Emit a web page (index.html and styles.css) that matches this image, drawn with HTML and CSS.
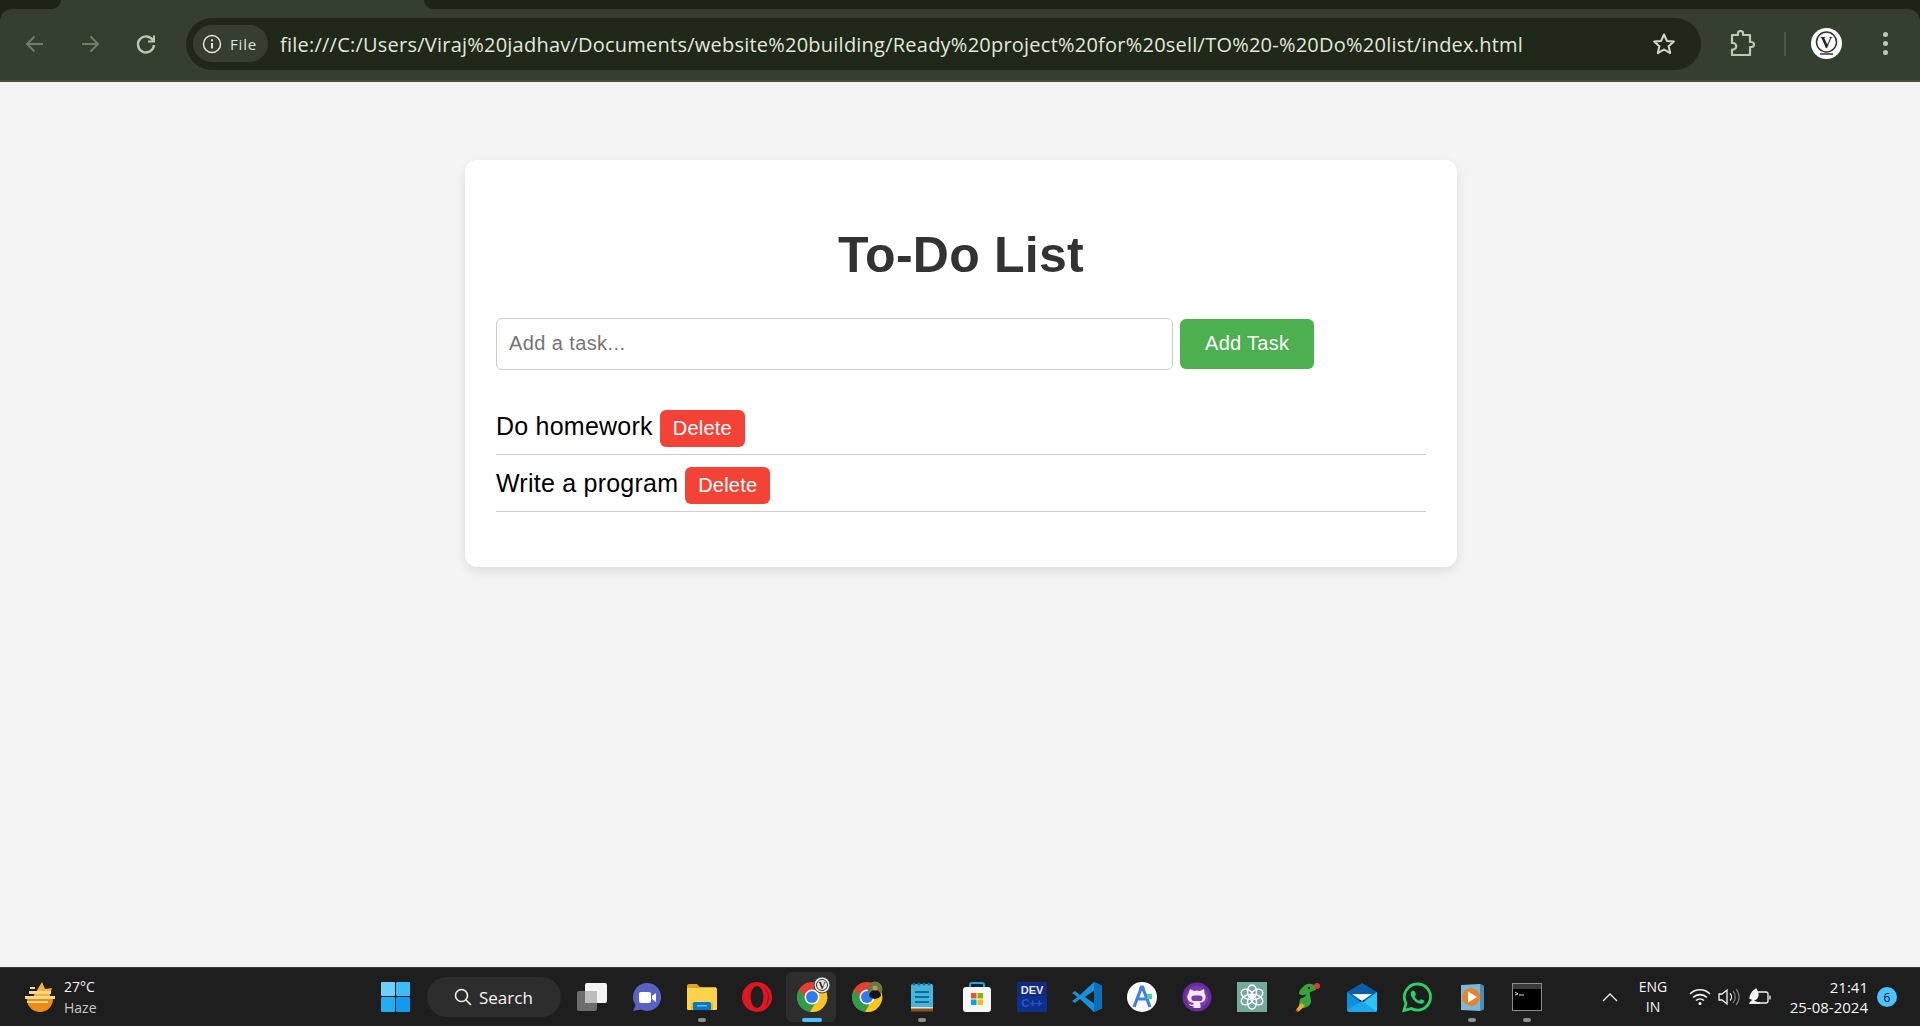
FILE: index.html
```html
<!DOCTYPE html>
<html lang="en">
  <head>
    <meta charset="UTF-8" />
    <meta name="viewport" content="width=device-width, initial-scale=1.0" />
    <title>To-Do List</title>
    <link rel="stylesheet" href="styles.css">
  </head>
  <body>
    <!-- Browser frame -->
    <header class="browser">
      <div class="tab-strip">
        <div class="strip-left"></div>
        <div class="active-tab"></div>
        <div class="strip-right"></div>
      </div>
      <div class="toolbar">
        <span class="nav-btn">
          <svg width="22" height="22" viewBox="0 0 22 22" fill="none" stroke="#6f7f68" stroke-width="2"><path d="M19 11H3M10.500 3.500 3 11l7.500 7.500"/></svg>
        </span>
        <span class="nav-btn">
          <svg width="22" height="22" viewBox="0 0 22 22" fill="none" stroke="#6f7f68" stroke-width="2"><path d="M3 11h16M11.500 3.500 19 11l-7.500 7.500"/></svg>
        </span>
        <span class="nav-btn reload-btn">
          <svg width="22" height="22" viewBox="0 0 22 22" fill="none" stroke="#b9c9b1" stroke-width="2.400"><path d="M18 7.500A8 8 0 1 0 19 12"/><path d="M19 2.500v6h-6" stroke-width="2"/></svg>
        </span>
        <div class="omnibox">
          <span class="site-chip">
            <svg width="20" height="20" viewBox="0 0 20 20" fill="none" stroke="#dfe6d8" stroke-width="1.500"><circle cx="10" cy="10" r="8.500"/><path d="M10 9v5.500" stroke-width="2"/><path d="M10 5.300v2" stroke-width="2"/></svg>
            <span class="chip-label">File</span>
          </span>
          <span class="url">file:///C:/Users/Viraj%20jadhav/Documents/website%20building/Ready%20project%20for%20sell/TO%20-%20Do%20list/index.html</span>
          <svg class="star" width="24" height="24" viewBox="0 0 24 24" fill="none" stroke="#d3dccb" stroke-width="2" stroke-linejoin="round"><path d="M12 2.500l2.900 6.400 7 .7-5.300 4.600 1.600 6.900-6.200-3.600-6.200 3.600 1.600-6.900-5.300-4.600 7-.7z"/></svg>
        </div>
        <svg class="puzzle" width="26" height="28" viewBox="0 0 26 28" fill="none" stroke="#bccab3" stroke-width="2.200" stroke-linejoin="round"><path d="M3 5h6V3.500a2.500 2.500 0 0 1 5 0V5h7v7h1.500a2.500 2.500 0 0 1 0 5H21v8H3v-5.500h1a3 3 0 0 0 0-6.500H3z"/></svg>
        <span class="tool-divider"></span>
        <span class="avatar">
          <svg width="31" height="31" viewBox="0 0 31 31"><circle cx="15.500" cy="15.500" r="15.500" fill="#fff"/><circle cx="15.500" cy="14" r="10" fill="none" stroke="#333" stroke-width="1.500"/><text x="15.500" y="20" text-anchor="middle" class="avatar-v">V</text><path d="M9 26h13" stroke="#333" stroke-width="1.500"/></svg>
        </span>
        <span class="menu-dots"><i></i><i></i><i></i></span>
      </div>
    </header>

    <!-- Page -->
    <main class="page">
      <div class="container">
        <h1>To-Do List</h1>
        <div class="task-form">
          <input class="task-input" type="text" placeholder="Add a task..." />
          <button class="add-btn">Add Task</button>
        </div>
        <ul class="task-list">
          <li class="task-item"><span>Do homework</span><button class="delete-btn">Delete</button></li>
          <li class="task-item"><span>Write a program</span><button class="delete-btn">Delete</button></li>
        </ul>
      </div>
    </main>

    <!-- Windows taskbar -->
    <footer class="taskbar">
      <div class="weather">
        <svg width="30" height="30" viewBox="0 0 30 30"><path d="M17 0l3 7 7-1-2 6a13 13 0 0 1-22 11z" fill="#f6b23c"/><path d="M2 17a13 13 0 0 0 26 0z" fill="#ee8a17"/><g fill="#f8d98a"><rect x="0" y="14" width="30" height="3"/><rect x="4" y="9" width="22" height="3"/><rect x="2" y="19" width="21" height="2"/><rect x="5" y="5" width="5" height="2"/></g></svg>
        <div class="weather-text">
          <span class="temp">27°C</span>
          <span class="sky">Haze</span>
        </div>
      </div>

      <span class="tile">
        <svg width="30" height="30" viewBox="0 0 30 30"><rect x="0" y="0" width="14" height="14" rx="1" fill="#6fd0fb"/><rect x="15" y="0" width="14" height="14" rx="1" fill="#3cbcf8"/><rect x="0" y="15" width="14" height="15" rx="1" fill="#22aef5"/><rect x="15" y="15" width="14" height="15" rx="1" fill="#109bf0"/></svg>
      </span>
      <div class="search-pill">
        <svg width="18" height="18" viewBox="0 0 18 18" fill="none" stroke="#f2f2f2" stroke-width="1.600"><circle cx="7.500" cy="7.500" r="6"/><path d="M12 12l5 5"/></svg>
        <span>Search</span>
      </div>

      <div class="apps">
        <!-- Task view -->
        <span class="tile">
          <svg width="30" height="30" viewBox="0 0 30 30"><rect x="0" y="9" width="20" height="20" rx="2" fill="#6d6d6d"/><rect x="8" y="1" width="22" height="20" rx="2" fill="#f4f4f4"/><rect x="8" y="9" width="12" height="12" fill="#bdbdbd"/></svg>
        </span>
        <!-- Meet -->
        <span class="tile">
          <svg width="30" height="30" viewBox="0 0 30 30"><path d="M15 1a14 14 0 1 1-6 26.600L1 29l2.500-6A14 14 0 0 1 15 1z" fill="#5b62c6"/><rect x="7" y="10" width="12" height="11" rx="2" fill="#fff"/><path d="M20 14l4-3v9l-4-3z" fill="#fff"/></svg>
        </span>
        <!-- File explorer -->
        <span class="tile running">
          <svg width="32" height="30" viewBox="0 0 32 30"><path d="M1 4a2 2 0 0 1 2-2h8l3 3h16v6H1z" fill="#e0a31a"/><rect x="1" y="6" width="30" height="22" rx="1" fill="#fcd24f"/><rect x="5" y="21" width="22" height="7" fill="#f2b90f"/><rect x="7" y="20" width="18" height="8" rx="1.500" fill="#0a78c8"/><rect x="11" y="23" width="10" height="1.500" fill="#5cc0f0"/></svg>
        </span>
        <!-- Opera -->
        <span class="tile">
          <svg width="30" height="30" viewBox="0 0 30 30"><circle cx="15" cy="15" r="15" fill="#e01722"/><ellipse cx="15" cy="15" rx="6.500" ry="11" fill="#1f1f1f"/><path d="M22 5a15 15 0 0 1 0 20 12 12 0 0 0 0-20z" fill="#a70d18"/></svg>
        </span>
        <!-- Chrome with profile badge -->
        <span class="tile active">
          <svg width="30" height="30" viewBox="0 0 30 30"><circle cx="15" cy="15" r="15" fill="#e3402f"/><path d="M2 7.500A15 15 0 0 0 13 29.900L19 19H11z" fill="#2f9e48"/><path d="M13 29.900A15 15 0 0 0 28.500 8H15l6 8z" fill="#f7c51c"/><circle cx="15" cy="15" r="7.500" fill="#fff"/><circle cx="15" cy="15" r="6" fill="#2e7cf0"/><circle cx="25" cy="3" r="8" fill="#e8e8e8" stroke="#444" stroke-width="1"/><circle cx="25" cy="3" r="5.500" fill="none" stroke="#333"/><text x="25" y="6.500" text-anchor="middle" class="badge-v">V</text></svg>
        </span>
        <!-- Chrome, second profile -->
        <span class="tile">
          <svg width="30" height="30" viewBox="0 0 30 30"><circle cx="15" cy="15" r="15" fill="#e3402f"/><path d="M2 7.500A15 15 0 0 0 13 29.900L19 19H11z" fill="#2f9e48"/><path d="M13 29.900A15 15 0 0 0 28.500 8H15l6 8z" fill="#f7c51c"/><circle cx="15" cy="15" r="7.500" fill="#fff"/><circle cx="15" cy="15" r="6" fill="#2e7cf0"/><circle cx="23" cy="7" r="7.500" fill="#6b7a3c"/><path d="M17 14a6 6 0 0 1 12 0 7.500 7.500 0 0 1-12 0z" fill="#10151c"/><circle cx="23" cy="6" r="2.500" fill="#c79468"/></svg>
        </span>
        <!-- Notepad -->
        <span class="tile running">
          <svg width="24" height="30" viewBox="0 0 24 30"><rect x="1" y="2" width="22" height="27" rx="1.500" fill="#45b5dc"/><rect x="1" y="26" width="22" height="3.500" fill="#8b4f1c"/><rect x="1" y="25" width="22" height="1.500" fill="#e6e0d0"/><g fill="#0d6d97"><rect x="5" y="9" width="14" height="2"/><rect x="5" y="14" width="14" height="2"/><rect x="5" y="19" width="14" height="2"/><circle cx="4" cy="2" r="1.500"/><circle cx="9" cy="2" r="1.500"/><circle cx="14" cy="2" r="1.500"/><circle cx="19" cy="2" r="1.500"/></g></svg>
        </span>
        <!-- Store -->
        <span class="tile">
          <svg width="30" height="30" viewBox="0 0 30 30"><path d="M8 7V3a2 2 0 0 1 2-2h10a2 2 0 0 1 2 2v4" fill="none" stroke="#1aa6e8" stroke-width="2"/><rect x="1" y="5" width="28" height="25" rx="3" fill="#f7f7f7"/><rect x="9" y="11" width="5.500" height="5.500" fill="#f25022"/><rect x="15.500" y="11" width="5.500" height="5.500" fill="#7fba00"/><rect x="9" y="17.500" width="5.500" height="5.500" fill="#00a4ef"/><rect x="15.500" y="17.500" width="5.500" height="5.500" fill="#ffb900"/></svg>
        </span>
        <!-- Dev C++ -->
        <span class="tile">
          <svg width="30" height="30" viewBox="0 0 30 30"><rect x="0" y="0" width="30" height="30" fill="#142a80"/><rect x="0" y="14" width="30" height="16" fill="#0f2f8c"/><text x="15" y="12" text-anchor="middle" class="dev-top">DEV</text><text x="15" y="25" text-anchor="middle" class="dev-bottom">C++</text></svg>
        </span>
        <!-- VS Code -->
        <span class="tile">
          <svg width="30" height="30" viewBox="0 0 30 30"><path d="M22 0l8 3.500v23L22 30 8 17l-5 4-3-2 5.500-4L0 11l3-2 5 4z" fill="#1b8fdc"/><path d="M22 0l8 3.500v23L22 30z" fill="#0a6fb8"/><path d="M22 8.500L13 15l9 6.500z" fill="#1f1f1f"/></svg>
        </span>
        <!-- Android Studio -->
        <span class="tile">
          <svg width="30" height="30" viewBox="0 0 30 30"><circle cx="15" cy="15" r="15" fill="#fff"/><path d="M15 4L7 25M15 4l8 21M9.500 17h11" fill="none" stroke="#3f7ff0" stroke-width="3.200"/><circle cx="15" cy="6" r="2.500" fill="#3f7ff0"/><rect x="20" y="12" width="5" height="5" fill="#3ddc84"/></svg>
        </span>
        <!-- GitHub -->
        <span class="tile">
          <svg width="30" height="30" viewBox="0 0 30 30"><circle cx="15" cy="15" r="14.500" fill="#6b2d9e"/><circle cx="15" cy="15" r="11" fill="#7b3db0"/><path d="M8 7l4 2a10 10 0 0 1 6 0l4-2 .5 4.500c1 1.500 1.500 3 1 5-.8 3-3.500 4-6 4.300.8.700 1 1.700 1 2.700v2.500h-7v-2c-2.500.5-4-.5-5-2.500 1.500.5 2.500 2 5 1v-1.700c-2.500-.300-5.200-1.300-6-4.300-.5-2 0-3.500 1-5z" fill="#f3e9f9"/><path d="M11 19c-1-.5-2-2-1.500-4 .5-1.500 2-1.500 5.500-1.500s5 0 5.500 1.500c.5 2-.5 3.500-1.500 4z" fill="#7b3db0"/></svg>
        </span>
        <!-- ChatGPT -->
        <span class="tile">
          <svg width="30" height="30" viewBox="0 0 30 30"><rect width="30" height="30" fill="#74aa9c"/><g fill="none" stroke="#fff" stroke-width="1.400"><ellipse cx="15" cy="9.500" rx="4.500" ry="6.500"/><ellipse cx="15" cy="9.500" rx="4.500" ry="6.500" transform="rotate(60 15 15)"/><ellipse cx="15" cy="9.500" rx="4.500" ry="6.500" transform="rotate(120 15 15)"/><ellipse cx="15" cy="9.500" rx="4.500" ry="6.500" transform="rotate(180 15 15)"/><ellipse cx="15" cy="9.500" rx="4.500" ry="6.500" transform="rotate(240 15 15)"/><ellipse cx="15" cy="9.500" rx="4.500" ry="6.500" transform="rotate(300 15 15)"/></g></svg>
        </span>
        <!-- Parrot -->
        <span class="tile">
          <svg width="30" height="30" viewBox="0 0 30 30"><path d="M11 5c3-4 9-4 12-1l1 4-6 2c-1 3 1 5 1 9 0 4-3 6-7 7l-5 .500c0-3 0-6 1-9 1-2 6-2 6-5-2 1-6 1-7-1 0-3 2-5 4-6.500z" fill="#37a53a"/><path d="M9 21l4 3-7 6-2-2z" fill="#f2a62c"/><path d="M3.500 30l1-3 2 1.500z" fill="#c6472a"/><circle cx="25" cy="4" r="3" fill="#d93a3a"/><circle cx="17" cy="6" r="1.200" fill="#123"/></svg>
        </span>
        <!-- Mail -->
        <span class="tile">
          <svg width="30" height="30" viewBox="0 0 30 30"><path d="M0 10L15 1l15 9v8H0z" fill="#0b5ea8"/><path d="M5 12h20l-10 7z" fill="#f2f6fa"/><path d="M0 10l15 11v9H2a2 2 0 0 1-2-2z" fill="#0c8fe0"/><path d="M30 10L15 21v9h13a2 2 0 0 0 2-2z" fill="#2fc2f8"/><path d="M0 28l15-9 15 11H2z" fill="#1ba6ee"/></svg>
        </span>
        <!-- WhatsApp -->
        <span class="tile">
          <svg width="30" height="30" viewBox="0 0 30 30"><path d="M15.500 2a13 13 0 1 1-6.200 24.400L2 28.500l2-7.200A13 13 0 0 1 15.500 2z" fill="none" stroke="#25d366" stroke-width="2.800"/><path d="M11 8.500c-1 0-2.300 1.300-2.300 3.200 0 4.200 5.500 10 10.300 10 2 0 3.300-1.400 3.300-2.500 0-.8-2.500-2-3.300-2-.7 0-1 1.400-1.800 1.400-1.500 0-4.500-3-4.500-4.200 0-.8 1.200-1.200 1.200-2 0-.8-1.200-3.900-2.900-3.900z" fill="#25d366"/></svg>
        </span>
        <!-- Media player -->
        <span class="tile running">
          <svg width="26" height="30" viewBox="0 0 26 30"><path d="M2 3l19-1 4 2v23l-4 2-19-1z" fill="#7fb7d8"/><path d="M21 2l4 2v23l-4 2z" fill="#4b8db5"/><circle cx="12" cy="15" r="9" fill="#e9832a"/><path d="M9 9.500l9 5.500-9 5.500z" fill="#fff"/></svg>
        </span>
        <!-- Terminal -->
        <span class="tile running">
          <svg width="30" height="28" viewBox="0 0 30 28"><rect x="0.500" y="0.500" width="29" height="27" fill="#000" stroke="#8c8c8c"/><rect x="1" y="1" width="28" height="5" fill="#3a3a3a"/><path d="M3 9l3 2-3 1M7 12h5" fill="none" stroke="#d8d8d8"/></svg>
        </span>
      </div>

      <div class="tray">
        <svg class="chevron" width="16" height="10" viewBox="0 0 16 10" fill="none" stroke="#f0f0f0" stroke-width="1.300"><path d="M1 9l7-7 7 7"/></svg>
        <div class="lang"><span>ENG</span><span>IN</span></div>
        <svg class="wifi" width="22" height="18" viewBox="0 0 22 18" fill="none" stroke="#f5f5f5" stroke-width="1.600"><path d="M1 6a14 14 0 0 1 20 0M4 9.500a10 10 0 0 1 14 0M7 12.500a6 6 0 0 1 8 0"/><circle cx="11" cy="15.500" r="1.500" fill="#f5f5f5" stroke="none"/></svg>
        <svg class="speaker" width="22" height="20" viewBox="0 0 22 20" fill="none" stroke="#f5f5f5" stroke-width="1.300"><path d="M1 7v6h3l5 4V3L4 7z"/><path d="M12 6.500a5 5 0 0 1 0 7"/><path d="M15 4a9 9 0 0 1 0 12M18 2a12 12 0 0 1 0 16" stroke="#777"/></svg>
        <svg class="battery" width="24" height="20" viewBox="0 0 24 20" fill="none" stroke="#f5f5f5" stroke-width="1.300"><path d="M5 5h13a2 2 0 0 1 2 2v7a2 2 0 0 1-2 2H2"/><path d="M22 8.500v4"/><path d="M2 12c0-5 3-8 6-10 2 3 3 6 1 9-2 2-5 2-7 5h10" fill="#f5f5f5"/></svg>
        <div class="clock"><span>21:41</span><span>25-08-2024</span></div>
        <span class="notify">6</span>
      </div>
    </footer>
  </body>
</html>
```

FILE: styles.css
```css
/* General styles */
* {
  box-sizing: border-box;
}

body {
  font-family: "Liberation Sans", Arial, sans-serif;
  background-color: #f4f4f4;
  margin: 0;
  height: 1026px;
  display: flex;
  flex-direction: column;
  overflow: hidden;
}

/* Browser frame */
.browser {
  background-color: #1b2416;
  flex: none;
}

.tab-strip {
  display: flex;
  height: 9px;
  background-color: #353f2f;
}

.strip-left {
  width: 61px;
  background-color: #1b2416;
  border-bottom-right-radius: 12px;
}

.active-tab {
  width: 363px;
}

.strip-right {
  flex: 1;
  background-color: #1b2416;
  border-bottom-left-radius: 12px;
}

.toolbar {
  display: flex;
  align-items: center;
  height: 73px;
  padding: 0 0 2px 7px;
  background-color: #353f2f;
  border-radius: 12px 12px 0 0;
  border-bottom: 2px solid #474f42;
}

.nav-btn {
  display: flex;
  justify-content: center;
  align-items: center;
  width: 55px;
}

.reload-btn {
  width: 58px;
}

.omnibox {
  display: flex;
  align-items: center;
  width: 1515px;
  height: 52px;
  margin-left: 11px;
  padding: 0 25px 0 7px;
  background-color: #1f2819;
  border-radius: 26px;
}

.site-chip {
  display: flex;
  align-items: center;
  gap: 8px;
  height: 37px;
  width: 75px;
  padding-left: 9px;
  background-color: #353f2f;
  border-radius: 19px;
}

.chip-label {
  font-family: "Open Sans", sans-serif;
  font-size: 15px;
  letter-spacing: 0.8px;
  color: #dfe6d8;
}

.url {
  flex: 1;
  margin-left: 12px;
  padding-top: 2px;
  font-family: "Open Sans", sans-serif;
  font-size: 20px;
  letter-spacing: 0.23px;
  color: #e1e8da;
  white-space: nowrap;
}

.puzzle {
  margin-left: 28px;
}

.tool-divider {
  width: 2px;
  height: 24px;
  margin-left: 29px;
  background-color: #4b5644;
}

.avatar {
  display: flex;
  margin-left: 25px;
}

.avatar-v {
  font-family: "Liberation Serif", serif;
  font-size: 17px;
  font-weight: 700;
  fill: #222;
}

.menu-dots {
  display: flex;
  flex-direction: column;
  gap: 4px;
  margin-left: 41px;
}

.menu-dots i {
  width: 5px;
  height: 5px;
  border-radius: 50%;
  background-color: #bccab3;
}

/* Page */
.page {
  flex: 1;
  padding-top: 78px;
}

.container {
  width: 992px;
  margin-left: 465px;
  padding: 31px;
  background-color: #fff;
  border-radius: 12px;
  box-shadow: 0px 4px 12px rgba(0, 0, 0, 0.1);
}

h1 {
  margin: 35px 0 34px;
  text-align: center;
  color: #333;
  font-size: 50px;
  letter-spacing: 0.25px;
}

.task-form {
  display: flex;
  align-items: center;
  gap: 7px;
}

.task-input {
  width: 677px;
  height: 52px;
  padding: 0 12px 2px;
  font-family: inherit;
  font-size: 20px;
  letter-spacing: 0.4px;
  border: 1px solid #ccc;
  border-radius: 6px;
}

.task-input::placeholder {
  color: #757575;
}

.add-btn {
  height: 50px;
  padding: 0 25px 2px;
  font-family: inherit;
  font-size: 20px;
  letter-spacing: 0.3px;
  color: #fff;
  background-color: #4caf50;
  border: none;
  border-radius: 6px;
}

.task-list {
  margin: 28px 0 24px;
  padding: 0;
  list-style: none;
}

.task-item {
  display: flex;
  align-items: baseline;
  gap: 7px;
  padding: 12px 0 7px;
  font-size: 25px;
  letter-spacing: 0.23px;
  color: #000;
  border-bottom: 1px solid #ccc;
}

.delete-btn {
  padding: 7px 13px;
  font-family: inherit;
  font-size: 20px;
  letter-spacing: 0.2px;
  color: #fff;
  background-color: #f44336;
  border: none;
  border-radius: 6px;
}

/* Taskbar */
.taskbar {
  flex: none;
  display: flex;
  align-items: center;
  height: 59px;
  padding-left: 25px;
  background-color: #1e1e1e;
  border-top: 1px solid #3a3a3a;
  font-family: "Open Sans", sans-serif;
  color: #f5f5f5;
}

.weather {
  flex: none;
  display: flex;
  align-items: center;
  gap: 9px;
  width: 343px;
}

.weather-text {
  display: flex;
  flex-direction: column;
  font-size: 14px;
  line-height: 21px;
}

.sky {
  color: #c8c8c8;
}

.tile {
  position: relative;
  flex: none;
  display: flex;
  justify-content: center;
  align-items: center;
  width: 55px;
  height: 58px;
}

.tile.active::before {
  content: "";
  position: absolute;
  left: 2px;
  top: 4px;
  width: 50px;
  height: 50px;
  background-color: #2e2e2e;
  border-radius: 6px;
}

.tile svg {
  position: relative;
  overflow: visible;
}

.tile.running::after,
.tile.active::after {
  content: "";
  position: absolute;
  left: 50%;
  bottom: 4px;
  width: 8px;
  height: 4px;
  margin-left: -4px;
  background-color: #8e8e8e;
  border-radius: 2px;
}

.tile.active::after {
  width: 20px;
  margin-left: -10px;
  background-color: #4cc2ff;
}

.badge-v {
  font-family: "Liberation Serif", serif;
  font-size: 10px;
  font-weight: 700;
  fill: #222;
}

.dev-top {
  font-family: "Liberation Sans", sans-serif;
  font-size: 11px;
  font-weight: 700;
  fill: #e4e8f5;
}

.dev-bottom {
  font-family: "Liberation Sans", sans-serif;
  font-size: 11px;
  font-weight: 700;
  fill: #2458d8;
}

.search-pill {
  flex: none;
  display: flex;
  align-items: center;
  gap: 7px;
  width: 134px;
  height: 40px;
  margin-left: 4px;
  padding-left: 27px;
  font-size: 17px;
  background-color: #2d2d2d;
  border-radius: 20px;
}

.apps {
  display: flex;
  margin-left: 3px;
}

.tray {
  display: flex;
  align-items: center;
  margin-left: 48px;
}

.chevron {
  margin-right: 15px;
}

.lang {
  display: flex;
  flex-direction: column;
  align-items: center;
  width: 40px;
  margin-right: 16px;
  font-size: 14px;
  line-height: 20px;
}

.speaker {
  margin-left: 7px;
}

.battery {
  margin-left: 8px;
}

.clock {
  display: flex;
  flex-direction: column;
  align-items: flex-end;
  width: 78px;
  margin-left: 18px;
  font-size: 15px;
  line-height: 20px;
  white-space: nowrap;
}

.notify {
  display: flex;
  justify-content: center;
  align-items: center;
  width: 20px;
  height: 20px;
  margin-left: 9px;
  font-size: 12px;
  color: #111;
  background-color: #4cc2ff;
  border-radius: 50%;
}
```
